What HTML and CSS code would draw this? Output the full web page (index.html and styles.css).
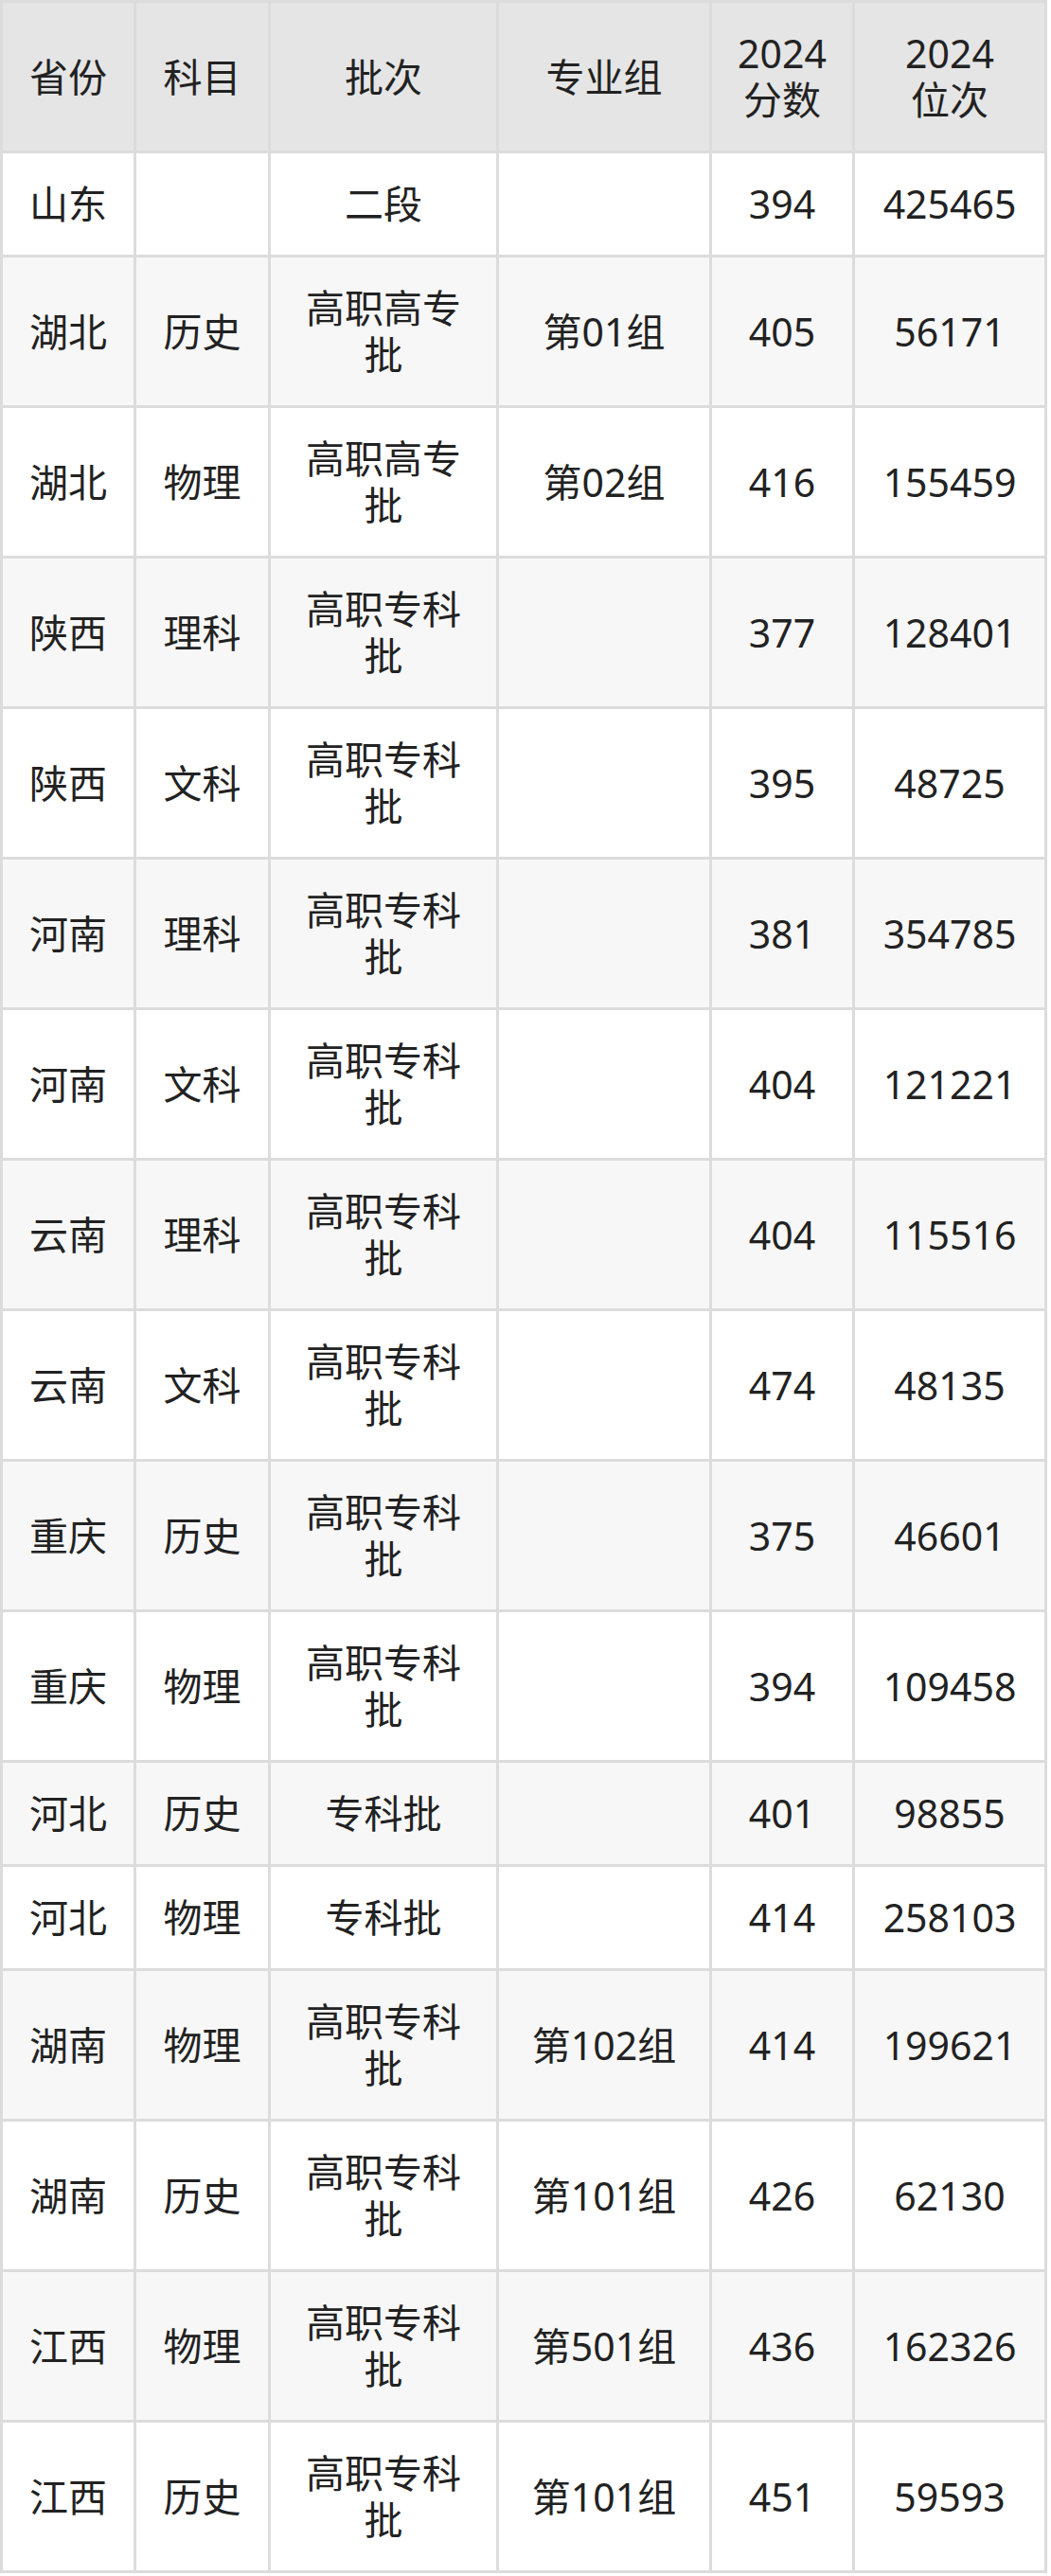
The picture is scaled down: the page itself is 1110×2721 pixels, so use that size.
FILE: index.html
```html
<!DOCTYPE html>
<html lang="zh-CN">
<head>
<meta charset="utf-8">
<title>2024 分数位次</title>
<link rel="stylesheet" href="styles.css">
</head>
<body>
<table class="score-table">
  <colgroup>
    <col class="c-prov">
    <col class="c-subj">
    <col class="c-batch">
    <col class="c-group">
    <col class="c-score">
    <col class="c-rank">
  </colgroup>
  <thead>
    <tr><th>省份</th><th>科目</th><th>批次</th><th>专业组</th><th>2024<br>分数</th><th>2024<br>位次</th></tr>
  </thead>
  <tbody>
    <tr><td>山东</td><td></td><td>二段</td><td></td><td>394</td><td>425465</td></tr>
    <tr><td>湖北</td><td>历史</td><td>高职高专批</td><td>第01组</td><td>405</td><td>56171</td></tr>
    <tr><td>湖北</td><td>物理</td><td>高职高专批</td><td>第02组</td><td>416</td><td>155459</td></tr>
    <tr><td>陕西</td><td>理科</td><td>高职专科批</td><td></td><td>377</td><td>128401</td></tr>
    <tr><td>陕西</td><td>文科</td><td>高职专科批</td><td></td><td>395</td><td>48725</td></tr>
    <tr><td>河南</td><td>理科</td><td>高职专科批</td><td></td><td>381</td><td>354785</td></tr>
    <tr><td>河南</td><td>文科</td><td>高职专科批</td><td></td><td>404</td><td>121221</td></tr>
    <tr><td>云南</td><td>理科</td><td>高职专科批</td><td></td><td>404</td><td>115516</td></tr>
    <tr><td>云南</td><td>文科</td><td>高职专科批</td><td></td><td>474</td><td>48135</td></tr>
    <tr><td>重庆</td><td>历史</td><td>高职专科批</td><td></td><td>375</td><td>46601</td></tr>
    <tr><td>重庆</td><td>物理</td><td>高职专科批</td><td></td><td>394</td><td>109458</td></tr>
    <tr><td>河北</td><td>历史</td><td>专科批</td><td></td><td>401</td><td>98855</td></tr>
    <tr><td>河北</td><td>物理</td><td>专科批</td><td></td><td>414</td><td>258103</td></tr>
    <tr><td>湖南</td><td>物理</td><td>高职专科批</td><td>第102组</td><td>414</td><td>199621</td></tr>
    <tr><td>湖南</td><td>历史</td><td>高职专科批</td><td>第101组</td><td>426</td><td>62130</td></tr>
    <tr><td>江西</td><td>物理</td><td>高职专科批</td><td>第501组</td><td>436</td><td>162326</td></tr>
    <tr><td>江西</td><td>历史</td><td>高职专科批</td><td>第101组</td><td>451</td><td>59593</td></tr>
  </tbody>
</table>
</body>
</html>
```

FILE: styles.css
```css
html, body {
  margin: 0;
  padding: 0;
  background: #ffffff;
}

.score-table {
  width: 1106px;
  table-layout: fixed;
  border-collapse: collapse;
  font-family: "Noto Sans", "Noto Sans CJK SC", sans-serif;
  font-size: 41px;
  line-height: 49px;
  color: #222222;
}

.c-prov { width: 141px; }
.c-subj { width: 142px; }
.c-batch { width: 241px; }
.c-group { width: 225px; }
.c-score { width: 151px; }
.c-rank { width: 203px; }

.score-table th,
.score-table td {
  border: 3px solid #dcdcdc;
  padding: 29px 18px;
  text-align: center;
  vertical-align: middle;
  font-weight: normal;
}

.score-table th {
  background: #e5e5e5;
  padding-top: 29px;
  padding-bottom: 29px;
}

.score-table tbody tr:nth-child(even) td {
  background: #f7f7f7;
}
```
